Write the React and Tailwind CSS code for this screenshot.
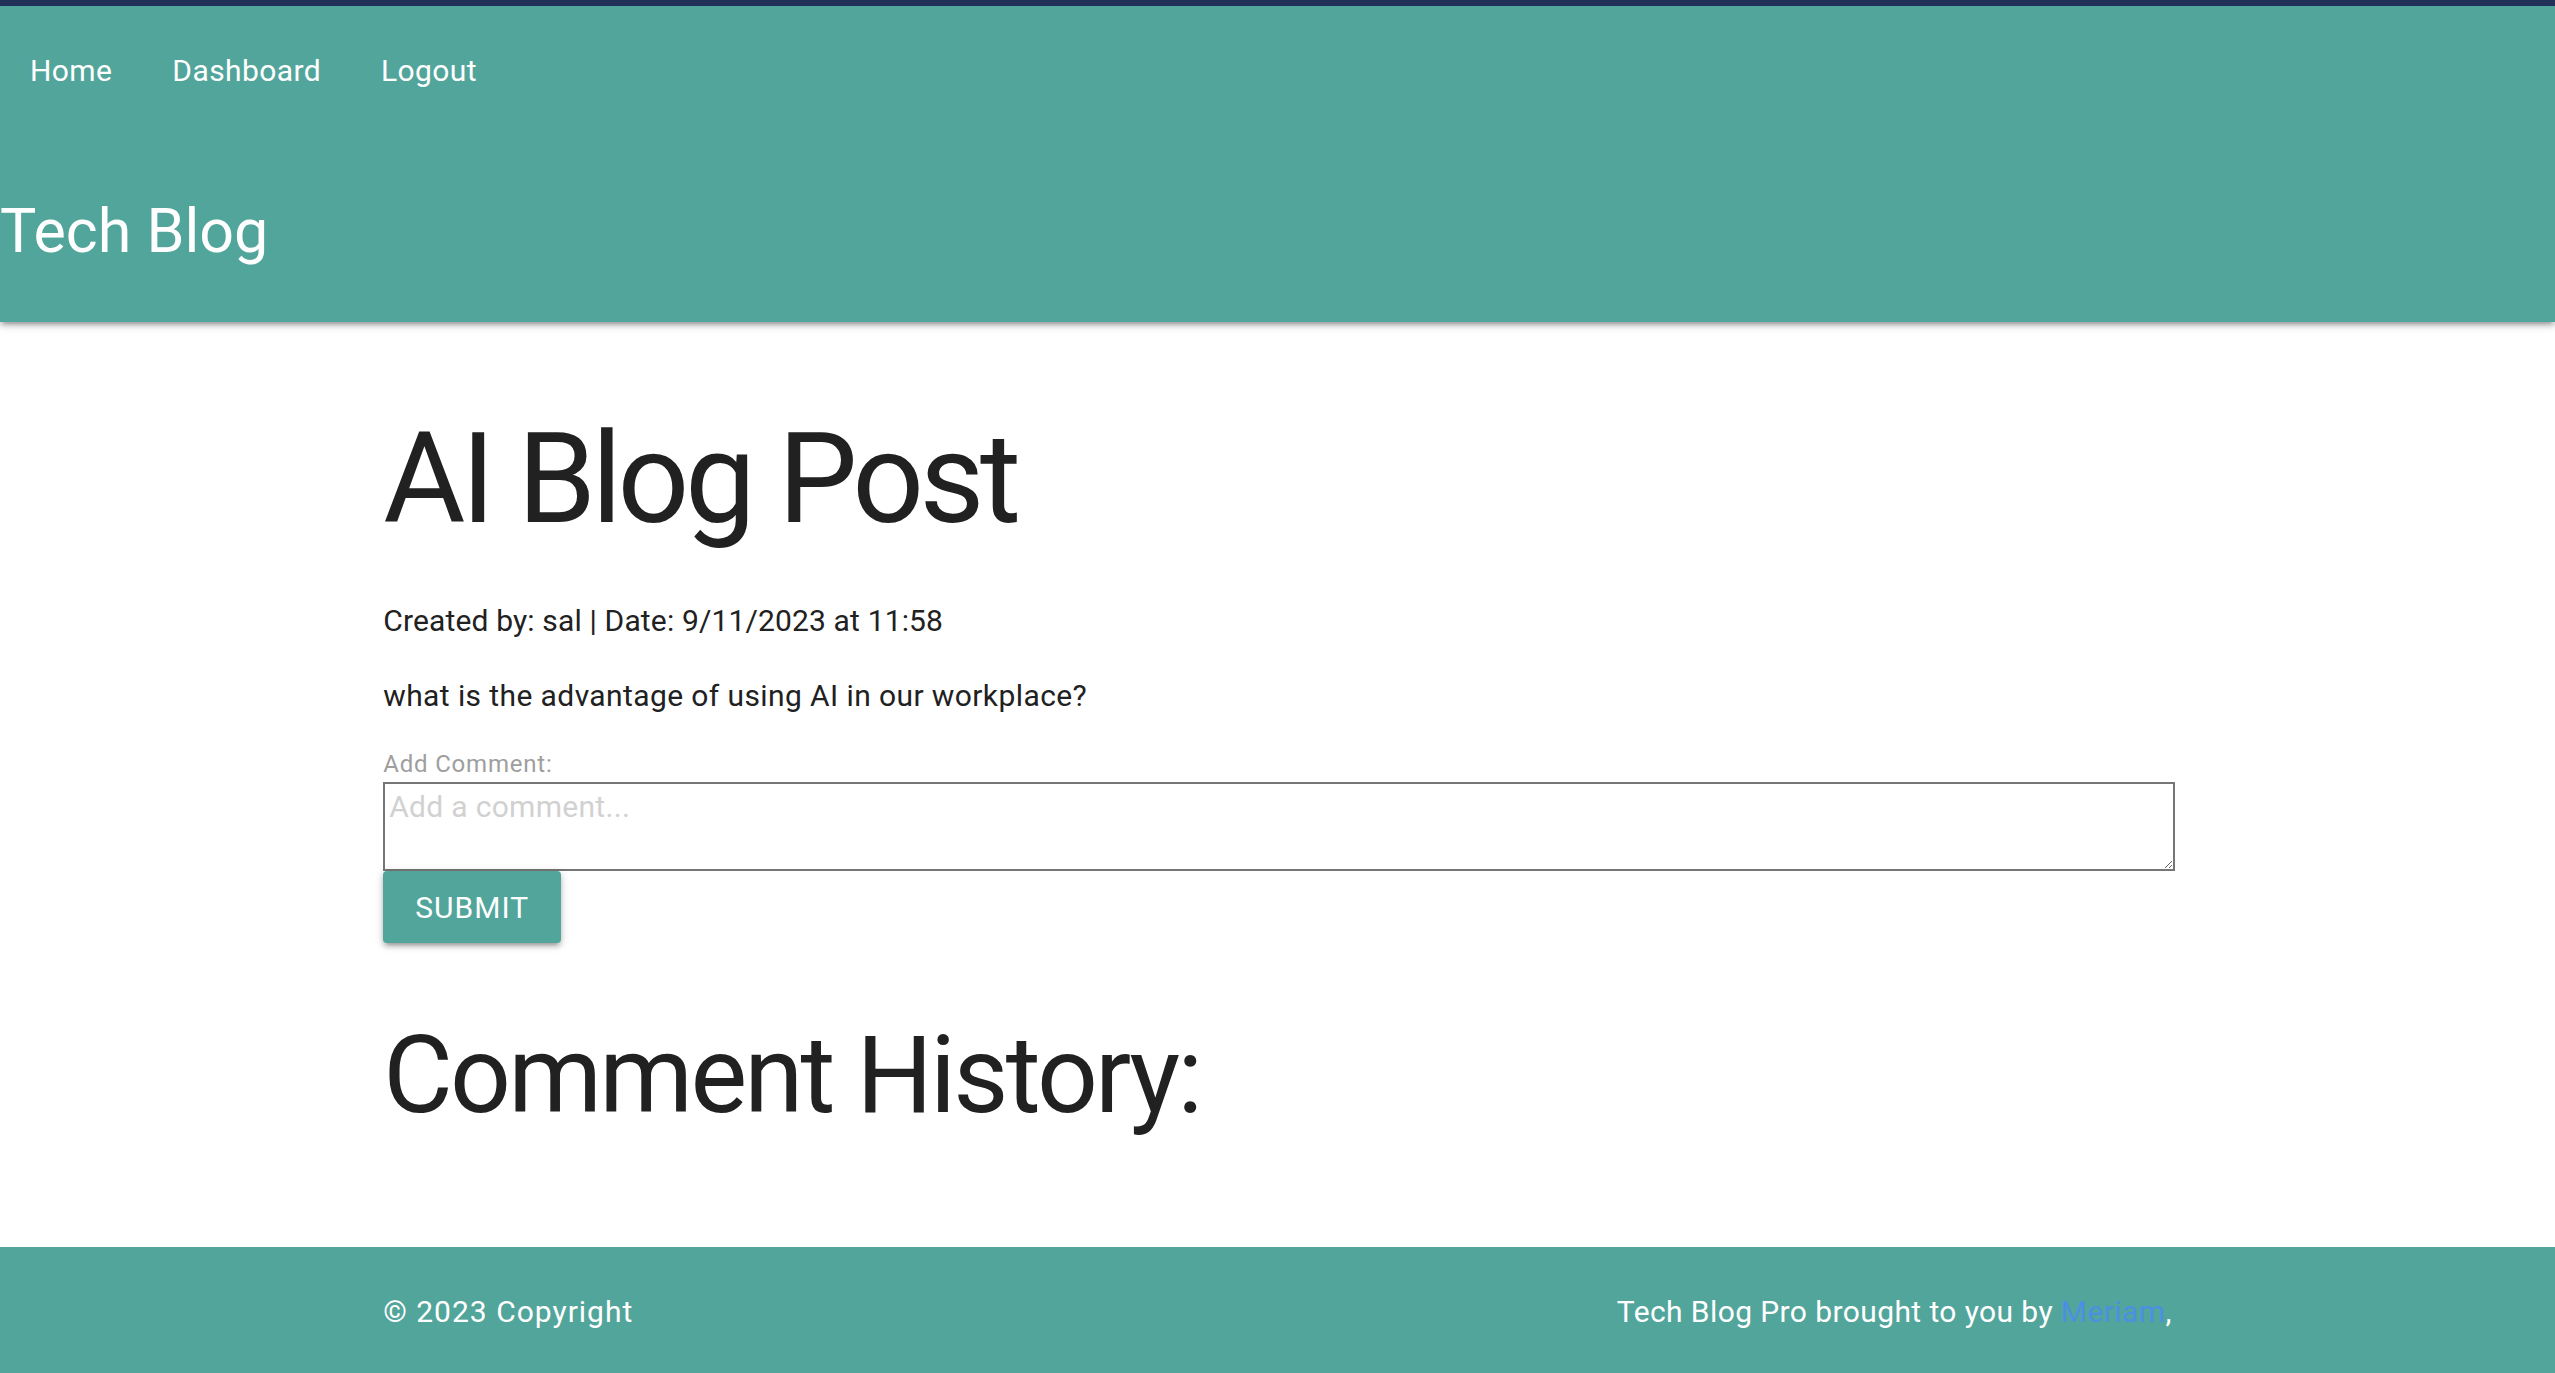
import React from 'react';

const navLinks = ['Home', 'Dashboard', 'Logout'];

const App = () => {
  return (
    <div className="h-screen flex flex-col bg-white text-[#212121] font-['Roboto',sans-serif] overflow-hidden">
      {/* Header */}
      <header className="relative z-10 border-t-[6px] border-[#213058] bg-[#52a59b] text-white shadow-[0_4px_4px_0_rgba(0,0,0,0.14),0_6px_2px_-4px_rgba(0,0,0,0.12),0_2px_10px_0_rgba(0,0,0,0.2)]">
        <nav className="h-[130px] flex items-center">
          <ul className="flex">
            {navLinks.map((link) => (
              <li key={link}>
                <a href="#" className="block px-[30px] text-[30px] tracking-[0.4px] leading-[130px]">{link}</a>
              </li>
            ))}
          </ul>
        </nav>
        <div className="pt-[65px] pb-[60px]">
          <h1 className="text-[61px] leading-none">Tech Blog</h1>
        </div>
      </header>

      {/* Post */}
      <main className="flex-1 w-[70%] mx-auto">
        <h1 className="mt-[94px] text-[126px] leading-none tracking-[-4.5px]">AI Blog Post</h1>
        <p className="mt-[56px] text-[30px] leading-[45px] tracking-[0.15px]">Created by: sal | Date: 9/11/2023 at 11:58</p>
        <p className="mt-[30px] text-[30px] leading-[45px] tracking-[0.4px]">what is the advantage of using AI in our workplace?</p>

        <form className="mt-[34px]">
          <label className="block text-[24px] leading-[24px] tracking-[0.8px] text-[#9e9e9e]">Add Comment:</label>
          <textarea
            placeholder="Add a comment..."
            className="block mt-[6px] w-[calc(100%+3px)] h-[89px] border-2 border-[#767676] px-[4px] pt-0 text-[30px] tracking-[0.3px] placeholder:text-[#d1d1d1] outline-none"
          ></textarea>
          <button
            type="submit"
            className="h-[72px] px-[32px] rounded-[4px] bg-[#52a59b] text-white text-[30px] tracking-[1px] uppercase shadow-[0_4px_4px_0_rgba(0,0,0,0.14),0_6px_2px_-4px_rgba(0,0,0,0.12),0_2px_10px_0_rgba(0,0,0,0.2)]"
          >
            Submit
          </button>
        </form>

        <h2 className="mt-[79px] text-[107px] leading-none tracking-[-2.8px]">Comment History:</h2>
      </main>

      {/* Footer */}
      <footer className="h-[126px] shrink-0 bg-[#52a59b] text-white">
        <div className="w-[70%] mx-auto pt-[42px] flex justify-between text-[30px] leading-[45px]">
          <span className="tracking-[1px]">© 2023 Copyright</span>
          <span className="tracking-[0.4px]">
            Tech Blog Pro brought to you by <a href="#" className="text-[#4a90e2]">Meriam</a>,
          </span>
        </div>
      </footer>
    </div>
  );
};

export default App;
